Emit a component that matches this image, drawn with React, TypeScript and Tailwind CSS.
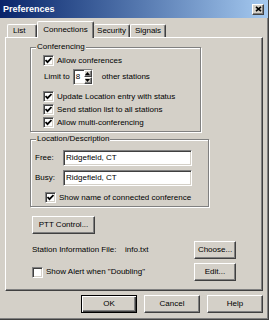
import React from "react";

const face = "font-['Liberation_Sans',Arial,sans-serif]";

const raised =
  "bg-[#d4d0c8] border border-t-white border-l-white border-r-[#404040] border-b-[#404040] shadow-[inset_-1px_-1px_0_#808080]";
const sunken =
  "bg-white border border-t-[#808080] border-l-[#808080] border-r-white border-b-white shadow-[inset_1px_1px_0_#404040,inset_-1px_-1px_0_#d4d0c8]";

const Check = ({ checked, label }: { checked: boolean; label: string }) => (
  <div className="flex items-center gap-[3px] h-[13px]">
    <span className={`w-[11px] h-[11px] shrink-0 flex items-center justify-center ${sunken}`}>
      {checked && (
        <svg width="7" height="7" viewBox="0 0 7 7">
          <polyline points="0.5,3 2.5,5.2 6.5,1" fill="none" stroke="#000" strokeWidth="1.8" />
        </svg>
      )}
    </span>
    <span className="whitespace-nowrap">{label}</span>
  </div>
);

const Group = ({ title, className, children }: { title: string; className: string; children: React.ReactNode }) => (
  <div className={`relative border border-[#808080] shadow-[1px_1px_0_#fff,inset_1px_1px_0_#fff] ${className}`}>
    <span className="absolute -top-[6px] left-[5px] px-[1px] bg-[#d4d0c8] leading-[10px] whitespace-nowrap">
      {title}
    </span>
    {children}
  </div>
);

const Button = ({ label, className, isDefault }: { label: string; className: string; isDefault?: boolean }) => (
  <div
    className={`flex items-center justify-center bg-[#d4d0c8] ${
      isDefault
        ? "border border-black shadow-[inset_1px_1px_0_#fff,inset_-1px_-1px_0_#404040,inset_-2px_-2px_0_#808080]"
        : raised
    } ${className}`}
  >
    {label}
  </div>
);

const Arrow = ({ up }: { up?: boolean }) => (
  <svg width="5" height="3" viewBox="0 0 5 3">
    <path d={up ? "M0 3 L2.5 0 L5 3Z" : "M0 0 L2.5 3 L5 0Z"} fill="#000" />
  </svg>
);

export default function App() {
  return (
    <div
      className={`w-[269px] h-[320px] bg-[#d4d0c8] flex flex-col text-[8px] text-black border-r border-b border-r-[#404040] border-b-[#404040] shadow-[inset_-1px_-1px_0_#808080] ${face}`}
    >
      {/* title bar */}
      <div className="h-[18px] shrink-0 flex items-center justify-between pl-[3px] pr-[4px] bg-linear-to-r from-[#0a246a] to-[#a6caf0]">
        <span className="text-white font-bold text-[9px] leading-none">Preferences</span>
        <span className={`w-[12px] h-[11px] flex items-center justify-center ${raised}`}>
          <svg width="7" height="6" viewBox="0 0 7 6">
            <path d="M1 0.8 L6 5.2 M6 0.8 L1 5.2" stroke="#000" strokeWidth="1.6" />
          </svg>
        </span>
      </div>

      <div className="flex flex-col px-[5px] pt-[3px]">
        {/* tabs */}
        <div className="relative z-10 flex items-end h-[17px] pl-[2px]">
          <div className="w-[30px] h-[13px] mb-[1px] pl-[5px] flex items-center border-t border-l border-r border-t-white border-l-white border-r-[#404040] shadow-[inset_-1px_0_0_#808080] rounded-t-[2px]">
            List
          </div>
          <div className="w-[57px] h-[17px] pt-[3px] flex justify-center leading-[10px] bg-[#d4d0c8] border-t border-l border-r border-t-white border-l-white border-r-[#404040] shadow-[inset_-1px_0_0_#808080] rounded-t-[2px]">
            Connections
          </div>
          <div className="w-[36px] h-[13px] mb-[1px] flex items-center justify-center border-t border-r border-t-white border-r-[#404040] shadow-[inset_-1px_0_0_#808080] rounded-t-[2px]">
            Security
          </div>
          <div className="w-[36px] h-[13px] mb-[1px] flex items-center justify-center border-t border-l border-r border-t-white border-l-white border-r-[#404040] shadow-[inset_-1px_0_0_#808080] rounded-t-[2px]">
            Signals
          </div>
        </div>

        {/* tab panel */}
        <div className="-mt-[1px] h-[254px] flex flex-col pl-[24px] border border-t-white border-l-white border-r-[#404040] border-b-[#404040] shadow-[inset_-1px_-1px_0_#808080]">
          <Group title="Conferencing" className="mt-[9px] w-[171px] flex flex-col pt-[6px] pb-[2px] pl-[12px]">
            <Check checked label="Allow conferences" />
            <div className="mt-[2px] h-[16px] flex items-center pl-[1px]">
              <span className="whitespace-nowrap">Limit to</span>
              <div className={`ml-[3px] w-[20px] h-[16px] flex ${sunken}`}>
                <span className="flex-1 pl-[2px] flex items-center">8</span>
                <div className="w-[8px] flex flex-col">
                  <span className={`flex-1 flex items-center justify-center ${raised}`}>
                    <Arrow up />
                  </span>
                  <span className={`flex-1 flex items-center justify-center ${raised}`}>
                    <Arrow />
                  </span>
                </div>
              </div>
              <span className="ml-[9px] whitespace-nowrap">other stations</span>
            </div>
            <div className="mt-[5px] flex flex-col">
              <Check checked label="Update Location entry with status" />
              <Check checked label="Send station list to all stations" />
              <Check checked label="Allow multi-conferencing" />
            </div>
          </Group>

          <Group title="Location/Description" className="mt-[7px] w-[179px] flex flex-col pt-[10px] pb-[2px] pl-[4px]">
            <div className="h-[16px] flex items-center">
              <span className="w-[28px]">Free:</span>
              <div className={`w-[129px] h-[16px] pl-[2px] flex items-center ${sunken}`}>Ridgefield, CT</div>
            </div>
            <div className="mt-[4px] h-[16px] flex items-center">
              <span className="w-[28px]">Busy:</span>
              <div className={`w-[129px] h-[16px] pl-[2px] flex items-center ${sunken}`}>Ridgefield, CT</div>
            </div>
            <div className="mt-[5px] ml-[10px]">
              <Check checked label="Show name of connected conference" />
            </div>
          </Group>

          <Button label="PTT Control..." className="mt-[9px] ml-[2px] w-[63px] h-[18px]" />

          <div className="mt-[7px] ml-[2px] w-[204px] h-[18px] flex items-center justify-between">
            <div className="flex items-center">
              <span className="w-[93px] whitespace-nowrap">Station Information File:</span>
              <span>info.txt</span>
            </div>
            <Button label="Choose..." className="w-[42px] h-[18px]" />
          </div>

          <div className="mt-[4px] ml-[2px] w-[204px] h-[18px] flex items-center justify-between">
            <Check checked={false} label={"Show Alert when \"Doubling\""} />
            <Button label="Edit..." className="w-[42px] h-[18px]" />
          </div>
        </div>

        {/* dialog buttons */}
        <div className="mt-[4px] flex justify-end gap-[7px]">
          <Button label="OK" isDefault className="w-[56px] h-[18px]" />
          <Button label="Cancel" className="w-[56px] h-[18px]" />
          <Button label="Help" className="w-[56px] h-[18px]" />
        </div>
      </div>
    </div>
  );
}
